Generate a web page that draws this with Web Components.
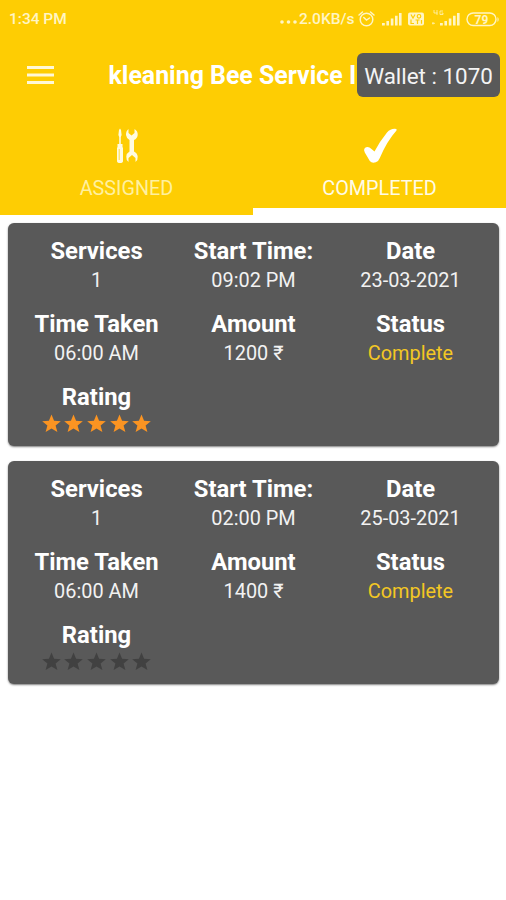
<!DOCTYPE html>
<html lang="en">
<head>
<meta charset="utf-8">
<title>kleaning Bee</title>
<style>
    body {
        margin: 0;
        background: #fff;
        color: #fff;
        font-family: Roboto, "Noto Sans", sans-serif;
    }
</style>
</head>
<body>
<bee-app></bee-app>

<script>
class StatusBar extends HTMLElement {
    connectedCallback() {
        this.attachShadow({ mode: 'open' });
        this.shadowRoot.innerHTML = `
            <style>
                :host {
                    display: flex;
                    justify-content: space-between;
                    align-items: center;
                    box-sizing: border-box;
                    height: 37px;
                    padding: 0 7px 0 9px;
                    color: #fff5c4;
                    font-size: 15.500px;
                    font-weight: 500;
                    line-height: 18px;
                }

                .right {
                    display: flex;
                    align-items: center;
                }

                .dots {
                    width: 17px;
                    height: 4px;
                    margin: 7px 2px 0 0;
                }

                .speed {
                    width: 58px;
                    white-space: nowrap;
                }

                svg {
                    display: block;
                    fill: currentColor;
                }
            </style>

            <span>1:34 PM</span>
            <div class="right">
                <svg class="dots" viewBox="0 0 17 4"><circle cx="2" cy="2" r="1.8"/><circle cx="8.5" cy="2" r="1.8"/><circle cx="15" cy="2" r="1.8"/></svg>
                <span class="speed">2.0KB/s</span>
                <svg width="142" height="20" viewBox="0 0 142 20">
                    <!-- alarm clock -->
                    <g fill="none" stroke="currentColor" stroke-width="1.5" stroke-linecap="round">
                        <circle cx="9.500" cy="10.500" r="6.300"/>
                        <path d="M2 6 5.500 3M17 6l-3.500-3M6.800 8.500 9.500 11l3-2"/>
                    </g>
                    <!-- first SIM -->
                    <path d="M25 14h2.800v2.500H25zM29.400 12h2.600v4.500h-2.600zM33.800 9.500h2.600v7h-2.600zM38 6.700h2.600v9.800H38zM42 4h2.600v12.500H42z"/>
                    <!-- VoLTE -->
                    <rect x="51" y="3.500" width="16" height="13" rx="2"/>
                    <g fill="none" stroke="#fecd03" stroke-width="1.200">
                        <path d="m54 5.500 2 3.500 2-3.500"/>
                        <circle cx="62" cy="7.300" r="1.800"/>
                        <path d="M54 10.500v4h3M58.500 11h4m-2 0v4M64.500 11v3.800"/>
                    </g>
                    <!-- second SIM with its 4G mark -->
                    <path d="M83 14h2.800v2.500H83zM87.400 12H90v4.500h-2.600zM91.800 9.500h2.600v7h-2.600zM96 6.700h2.600v9.800H96zM100 4h2.600v12.500H100z"/>
                    <path d="M77 1v3h3.500M80 1v5M86 2h-3v3.500h3V4h-1.500M76 13v2.500M75 14.300h3" fill="none" stroke="currentColor" opacity=".75"/>
                    <!-- battery -->
                    <rect x="110" y="4" width="29" height="12.500" rx="6.200" fill="none" stroke="currentColor" stroke-width="1.400"/>
                    <path d="M140.500 8c1.500 1 1.500 4 0 5z"/>
                    <text x="124.500" y="14.500" font-size="12" font-weight="700" text-anchor="middle">79</text>
                </svg>
            </div>
        `;
    }
}

class AppHeader extends HTMLElement {
    connectedCallback() {
        this.attachShadow({ mode: 'open' });
        this.shadowRoot.innerHTML = `
            <style>
                :host {
                    display: flex;
                    align-items: center;
                    position: relative;
                    height: 78px;
                    padding-left: 26.500px;
                    overflow: hidden;
                }

                svg {
                    flex: none;
                    margin-bottom: 3px;
                    fill: #fff8d8;
                }

                h1 {
                    margin: 0 0 0 55px;
                    font-size: 24.900px;
                    font-weight: 700;
                    line-height: 30px;
                    white-space: nowrap;
                }

                /* the balance sits over the end of the title */
                .wallet {
                    position: absolute;
                    top: 16px;
                    right: 6px;
                    box-sizing: border-box;
                    width: 143px;
                    height: 44px;
                    border-radius: 6px;
                    background: #595959;
                    color: #f4f4f4;
                    font-size: 22.400px;
                    line-height: 46px;
                    text-align: center;
                    white-space: nowrap;
                }
            </style>

            <svg width="27" height="20" viewBox="0 0 27 20"><path d="M0 1h27v3H0zM0 8.500h27v3H0zM0 16h27v3H0z"/></svg>
            <h1><slot></slot></h1>
            <div class="wallet"><slot name="wallet"></slot></div>
        `;
    }
}

class BeeTab extends HTMLElement {
    connectedCallback() {
        this.attachShadow({ mode: 'open' });
        this.shadowRoot.innerHTML = `
            <style>
                :host {
                    display: flex;
                    flex-direction: column;
                    align-items: center;
                    box-sizing: border-box;
                    flex: 1;
                    height: 100px;
                    padding-top: 12px;
                    color: #fff09f;
                    font-size: 19.800px;
                    line-height: 24px;
                }

                :host([active]) {
                    border-bottom: 7px solid #fff;
                    color: #fffbe6;
                }

                ::slotted(svg) {
                    display: block;
                    margin-bottom: 12px;
                }
            </style>
            <slot name="icon"></slot>
            <span><slot></slot></span>
        `;
    }
}

class StarRating extends HTMLElement {
    connectedCallback() {
        const value = Number(this.getAttribute('value'));
        let stars = '';
        for (let i = 0; i < 5; i++) {
            const fill = i < value ? '#fb9422' : '#414141';
            stars += `<svg width="19" height="19" viewBox="0 0 20 19"><path fill="${fill}" d="M10 0l2.700 6.700 7.100.4-5.500 4.600 1.900 6.800L10 14.700l-6.200 3.800 1.900-6.800L.2 7.100l7.100-.4z"/></svg>`;
        }

        this.attachShadow({ mode: 'open' });
        this.shadowRoot.innerHTML = `
            <style>
                :host {
                    display: flex;
                    justify-content: center;
                    gap: 3.600px;
                    padding-top: 2px;
                }
            </style>
            ${stars}
        `;
    }
}

class InfoCell extends HTMLElement {
    connectedCallback() {
        this.attachShadow({ mode: 'open' });
        this.shadowRoot.innerHTML = `
            <style>
                :host {
                    display: block;
                    height: 73px;
                    color: #f2f2f2;
                    font-size: 19.900px;
                    line-height: 29px;
                    text-align: center;
                    white-space: nowrap;
                }

                :host([highlight]) {
                    color: #f3c724;
                }

                .label {
                    color: #fff;
                    font-size: 23.800px;
                    font-weight: 700;
                    line-height: 30px;
                }
            </style>
            <div class="label">${this.getAttribute('label')}</div>
            <slot></slot>
        `;
    }
}

class ServiceCard extends HTMLElement {
    connectedCallback() {
        const get = name => this.getAttribute(name);
        this.attachShadow({ mode: 'open' });
        this.shadowRoot.innerHTML = `
            <style>
                :host {
                    display: grid;
                    grid-template-columns: repeat(3, 1fr);
                    box-sizing: border-box;
                    height: 223px;
                    padding: 13px 10px 0 10px;
                    border-radius: 6px;
                    background: #595959;
                    box-shadow: 0 1px 2px rgba(0, 0, 0, 0.5);
                }
            </style>
            <info-cell label="Services">${get('services')}</info-cell>
            <info-cell label="Start Time:">${get('start')}</info-cell>
            <info-cell label="Date">${get('date')}</info-cell>
            <info-cell label="Time Taken">${get('taken')}</info-cell>
            <info-cell label="Amount">${get('amount')} ₹</info-cell>
            <info-cell label="Status" highlight>Complete</info-cell>
            <info-cell label="Rating"><star-rating value="${get('rating')}"></star-rating></info-cell>
        `;
    }
}

class BeeApp extends HTMLElement {
    connectedCallback() {
        this.attachShadow({ mode: 'open' });
        this.shadowRoot.innerHTML = `
            <style>
                :host {
                    display: block;
                    width: 506px;
                    height: 900px;
                    overflow: hidden;
                    background: #fff;
                }

                header {
                    background: #fecd03;
                }

                nav {
                    display: flex;
                }

                main {
                    display: flex;
                    flex-direction: column;
                    gap: 15px;
                    padding: 8px 7px 0 8px;
                }
            </style>

            <header>
                <status-bar></status-bar>
                <app-header>kleaning Bee Service I<span slot="wallet">Wallet : 1070</span></app-header>
                <nav>
                    <bee-tab>
                        <svg slot="icon" width="22" height="38" viewBox="0 0 22 38">
                            <path fill="#fffbe0" d="M3 3l1-1.500L5 3l.6 5-.8 2v7H6.500v3l.5 1v13q0 2-3 2t-3-2V21l.5-1v-3h1.700v-7l-.8-2z"/>
                            <path d="M3.200 22v11" stroke="#fecd03" stroke-width=".7"/>
                            <path fill="#fffbe0" d="M12.500 2v4l3 2.500 3-2.500V2q3.500 2 3.200 6-.4 3.500-3.700 5v11.500q3.300 1.500 3.700 5 .3 3.500-2.200 5.500v-4l-3.500-3-3.500 3v4q-2.500-2-2.200-5.500.4-3.500 3.200-5V13q-3-1.500-3.500-5-.2-4 2.500-6z"/>
                        </svg>
                        ASSIGNED
                    </bee-tab>
                    <bee-tab active>
                        <svg slot="icon" width="36" height="38" viewBox="0 0 36 38">
                            <path fill="#fff" d="M34.500 2Q29 1 25 5.500 18 14 12.500 24.500L9.500 22Q6 18.500 2.800 21q-1.600 2 0 4.500l5 8.500q2.200 2.500 6 1.200 2.700-.7 4-4.200Q25 14 34.500 3.500z"/>
                        </svg>
                        COMPLETED
                    </bee-tab>
                </nav>
            </header>
            <main>
                <service-card services="1" start="09:02 PM" date="23-03-2021" taken="06:00 AM" amount="1200" rating="5"></service-card>
                <service-card services="1" start="02:00 PM" date="25-03-2021" taken="06:00 AM" amount="1400" rating="0"></service-card>
            </main>
        `;
    }
}

customElements.define('status-bar', StatusBar);
customElements.define('app-header', AppHeader);
customElements.define('bee-tab', BeeTab);
customElements.define('star-rating', StarRating);
customElements.define('info-cell', InfoCell);
customElements.define('service-card', ServiceCard);
customElements.define('bee-app', BeeApp);
</script>
</body>
</html>
